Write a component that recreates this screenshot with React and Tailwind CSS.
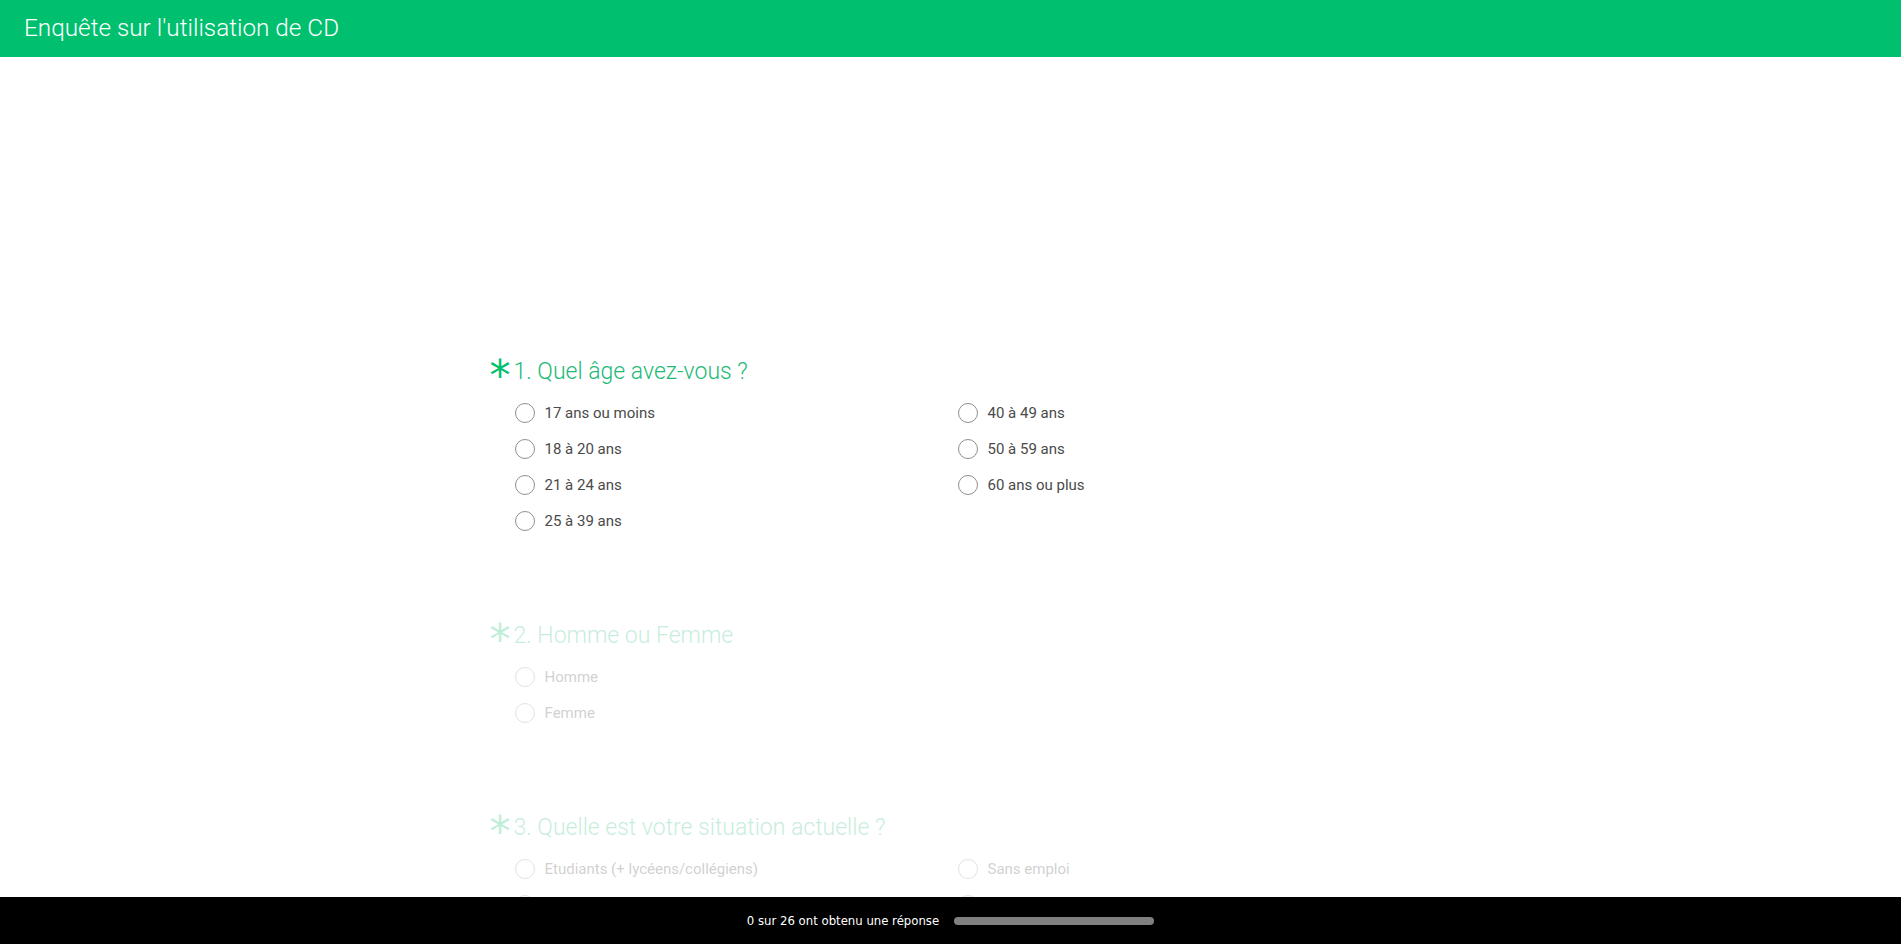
import React from "react";

const questions = [
  {
    title: "1. Quel âge avez-vous ?",
    faded: false,
    cols: [
      ["17 ans ou moins", "18 à 20 ans", "21 à 24 ans", "25 à 39 ans"],
      ["40 à 49 ans", "50 à 59 ans", "60 ans ou plus"],
    ],
  },
  {
    title: "2. Homme ou Femme",
    faded: true,
    cols: [["Homme", "Femme"]],
  },
  {
    title: "3. Quelle est votre situation actuelle ?",
    faded: true,
    cols: [
      ["Etudiants (+ lycéens/collégiens)", "Salariés"],
      ["Sans emploi", "Retraités"],
    ],
  },
];

function Option({ label }) {
  return (
    <label className="flex h-[36px] items-center gap-[10px] cursor-pointer">
      <span className="block h-[20px] w-[20px] shrink-0 rounded-full border border-[#8f8f8f] bg-white" />
      <span className="text-[15px] text-[#4a4a4a]">{label}</span>
    </label>
  );
}

function Question({ q }) {
  return (
    <section className={q.faded ? "opacity-25 pb-[83px]" : "pb-[83px]"}>
      <div className="flex items-start">
        <span
          className="w-[24px] shrink-0 h-[28px] leading-[36px] text-[42px] text-[#00bf6f] overflow-visible"
          style={{ fontFamily: '"DejaVu Sans", sans-serif' }}
        >
          *
        </span>
        <h2 className="h-[28px] leading-[28px] text-[23px] font-light text-[#22b977]">
          {q.title}
        </h2>
      </div>
      <div className="mt-[9px] ml-[25px] grid grid-cols-[443px_1fr]">
        {q.cols.map((col, i) => (
          <div key={i} className="flex flex-col">
            {col.map((o) => (
              <Option key={o} label={o} />
            ))}
          </div>
        ))}
      </div>
    </section>
  );
}

export default function App() {
  return (
    <div
      className="flex h-screen flex-col overflow-hidden bg-white"
      style={{ fontFamily: 'Roboto, "Liberation Sans", sans-serif' }}
    >
      <header className="flex h-[57px] shrink-0 items-center bg-[#00bf6f] px-[24px]">
        <h1 className="text-[24.3px] font-light text-white">Enquête sur l'utilisation de CD</h1>
      </header>
      <main className="flex-1 overflow-hidden">
        <div className="mx-auto w-[922px] pt-[301px]">
          {questions.map((q) => (
            <Question key={q.title} q={q} />
          ))}
        </div>
      </main>
      <footer className="flex h-[47px] shrink-0 items-center justify-center gap-[15px] bg-black">
        <span
          className="text-[13px] text-white font-stretch-condensed"
          style={{ fontFamily: '"DejaVu Sans", sans-serif' }}
        >
          0 sur 26 ont obtenu une réponse
        </span>
        <div className="h-[8px] w-[200px] rounded bg-[#808080]" />
      </footer>
    </div>
  );
}
